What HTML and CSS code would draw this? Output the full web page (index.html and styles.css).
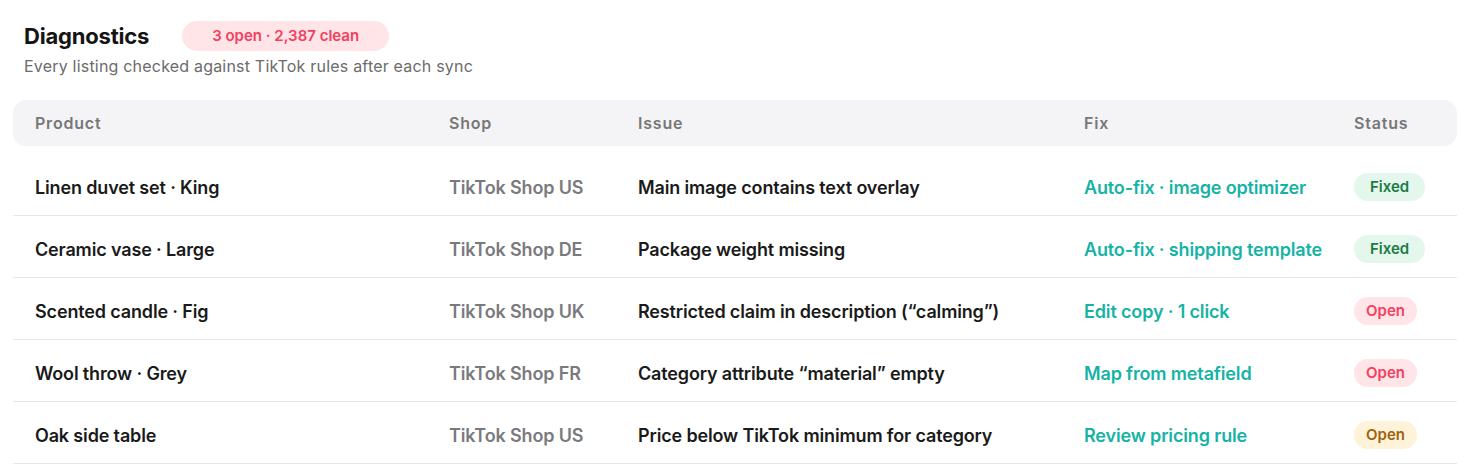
FILE: index.html
```html
<!DOCTYPE html>
<html lang="en">
<head>
    <meta charset="UTF-8">
    <title>Diagnostics</title>
    <link rel="stylesheet" href="styles.css">
</head>
<body>
    <div class="panel">
        <div class="panel-head">
            <div class="title-row">
                <h2>Diagnostics</h2>
                <span class="summary">3 open · 2,387 clean</span>
            </div>
            <p class="subtitle">Every listing checked against TikTok rules after each sync</p>
        </div>
        <div class="table">
            <div class="row head">
                <div>Product</div>
                <div>Shop</div>
                <div>Issue</div>
                <div>Fix</div>
                <div>Status</div>
            </div>
            <div class="row">
                <div class="product">Linen duvet set · King</div>
                <div class="shop">TikTok Shop US</div>
                <div class="issue">Main image contains text overlay</div>
                <div class="fix">Auto-fix · image optimizer</div>
                <div><span class="pill fixed">Fixed</span></div>
            </div>
            <div class="row">
                <div class="product">Ceramic vase · Large</div>
                <div class="shop">TikTok Shop DE</div>
                <div class="issue">Package weight missing</div>
                <div class="fix">Auto-fix · shipping template</div>
                <div><span class="pill fixed">Fixed</span></div>
            </div>
            <div class="row">
                <div class="product">Scented candle · Fig</div>
                <div class="shop">TikTok Shop UK</div>
                <div class="issue">Restricted claim in description (“calming”)</div>
                <div class="fix">Edit copy · 1 click</div>
                <div><span class="pill open">Open</span></div>
            </div>
            <div class="row">
                <div class="product">Wool throw · Grey</div>
                <div class="shop">TikTok Shop FR</div>
                <div class="issue">Category attribute “material” empty</div>
                <div class="fix">Map from metafield</div>
                <div><span class="pill open">Open</span></div>
            </div>
            <div class="row">
                <div class="product">Oak side table</div>
                <div class="shop">TikTok Shop US</div>
                <div class="issue">Price below TikTok minimum for category</div>
                <div class="fix">Review pricing rule</div>
                <div><span class="pill warn">Open</span></div>
            </div>
        </div>
    </div>
</body>
</html>
```
FILE: styles.css
```css
body {
    margin: 0;
    background-color: #ffffff;
    color: #1a1a1a;
    font-family: Inter, "Noto Sans", sans-serif;
}
.panel {
    padding: 21px 15px 0 13px;
}
.panel-head {
    padding-left: 11px;
}
.title-row {
    display: flex;
    align-items: center;
    gap: 33px;
}
.title-row h2 {
    margin: 0;
    font-size: 22px;
    font-weight: 700;
    color: #141414;
    letter-spacing: -0.2px;
}
.summary {
    background-color: #ffe4e8;
    color: #f43f5e;
    font-size: 15px;
    font-weight: 600;
    padding: 5px 30px 6px;
    border-radius: 15px;
}
.subtitle {
    margin: 5px 0 0;
    font-size: 16px;
    letter-spacing: 0.2px;
    color: #6b6b6b;
}
.table {
    margin-top: 24px;
}
.row {
    display: grid;
    grid-template-columns: 414px 189px 446px 270px 1fr;
    align-items: center;
    padding: 5px 22px 0;
    height: 56px;
    border-bottom: 1px solid #e8e8ea;
    font-size: 18px;
    font-weight: 600;
    letter-spacing: -0.15px;
}
.row.head {
    height: 46px;
    padding-top: 0;
    margin-bottom: 8px;
    background-color: #f4f4f6;
    border-bottom: none;
    border-radius: 13px;
    font-size: 16px;
    letter-spacing: 0.8px;
    color: #777777;
}
.product {
    color: #1a1a1a;
}
.shop {
    color: #7a7a7e;
}
.issue {
    color: #1a1a1a;
}
.fix {
    color: #16b3a5;
}
.pill {
    display: inline-block;
    font-size: 15px;
    font-weight: 600;
    letter-spacing: 0;
    padding: 4px 12px 5px;
    border-radius: 14px;
}
.pill.fixed {
    padding: 4px 16px 5px;
    background-color: #e3f7ec;
    color: #1c7a45;
}
.pill.open {
    background-color: #ffe4e8;
    color: #f43f5e;
}
.pill.warn {
    background-color: #fef3d9;
    color: #a0620c;
}
```
